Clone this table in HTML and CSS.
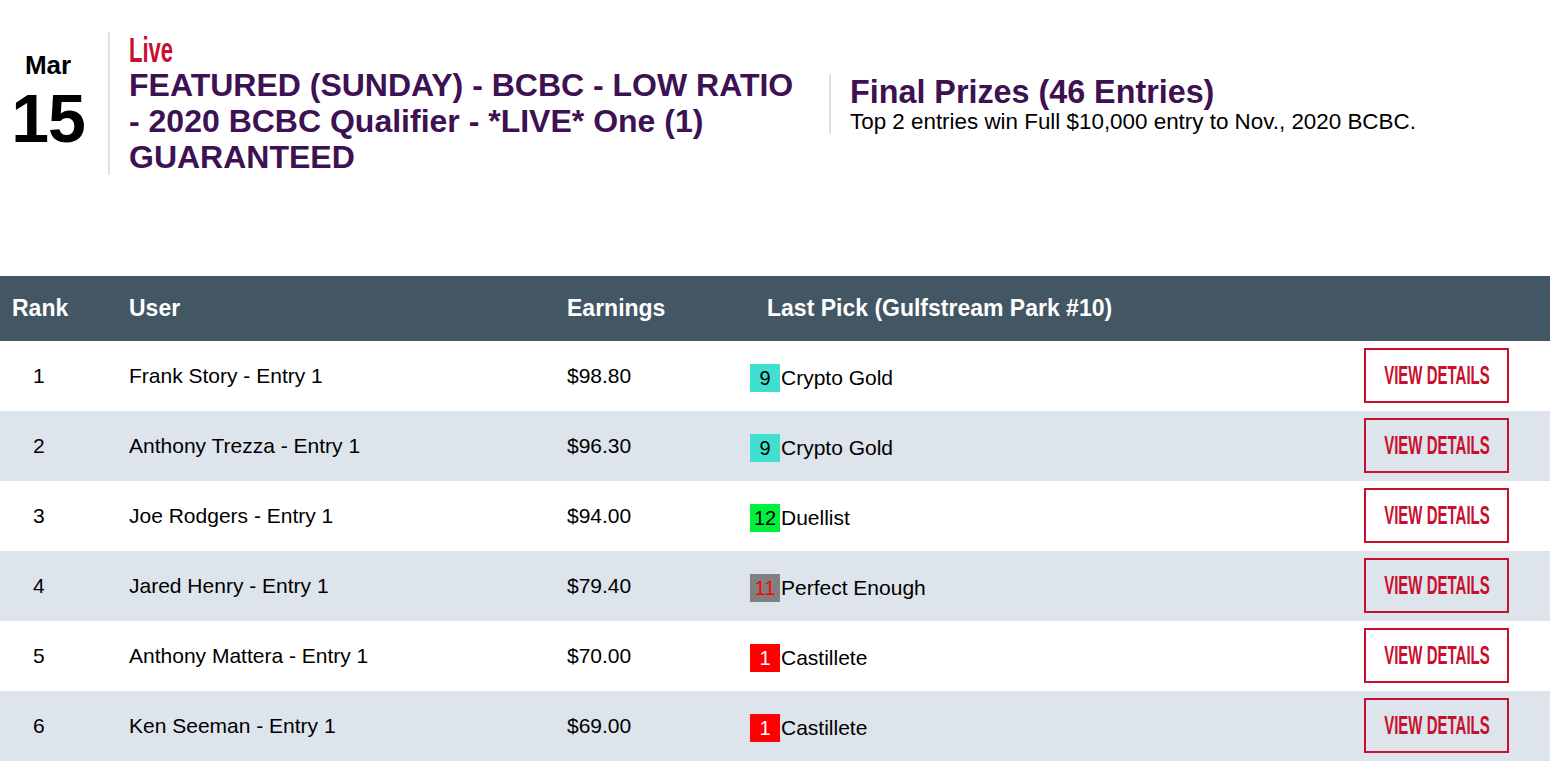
FILE: index.html
```html
<!DOCTYPE html>
<html>
<head>
<meta charset="utf-8">
<link rel="stylesheet" href="styles.css">
</head>
<body>
<header class="event">
  <div class="date">
    <div class="month">Mar</div>
    <div class="day">15</div>
  </div>
  <div class="info">
    <div class="status"><span class="live">Live</span></div>
    <h1 class="title">FEATURED (SUNDAY) - BCBC - LOW RATIO - 2020 BCBC Qualifier - *LIVE* One (1) GUARANTEED</h1>
  </div>
  <div class="prizes">
    <div class="prizes-title">Final Prizes (46 Entries)</div>
    <div class="prizes-text">Top 2 entries win Full $10,000 entry to Nov., 2020 BCBC.</div>
  </div>
</header>
<table class="board">
  <colgroup>
    <col class="c-rank"><col class="c-user"><col class="c-earn"><col class="c-pick"><col class="c-btn">
  </colgroup>
  <thead>
    <tr>
      <th class="th-rank">Rank</th>
      <th>User</th>
      <th>Earnings</th>
      <th class="th-pick">Last Pick (Gulfstream Park #10)</th>
      <th></th>
    </tr>
  </thead>
  <tbody>
    <tr>
      <td class="rank">1</td><td>Frank Story - Entry 1</td><td>$98.80</td>
      <td><span class="badge b-turq">9</span><span class="horse">Crypto Gold</span></td>
      <td class="act"><a class="btn"><span>VIEW DETAILS</span></a></td>
    </tr>
    <tr>
      <td class="rank">2</td><td>Anthony Trezza - Entry 1</td><td>$96.30</td>
      <td><span class="badge b-turq">9</span><span class="horse">Crypto Gold</span></td>
      <td class="act"><a class="btn"><span>VIEW DETAILS</span></a></td>
    </tr>
    <tr>
      <td class="rank">3</td><td>Joe Rodgers - Entry 1</td><td>$94.00</td>
      <td><span class="badge b-green">12</span><span class="horse">Duellist</span></td>
      <td class="act"><a class="btn"><span>VIEW DETAILS</span></a></td>
    </tr>
    <tr>
      <td class="rank">4</td><td>Jared Henry - Entry 1</td><td>$79.40</td>
      <td><span class="badge b-gray">11</span><span class="horse">Perfect Enough</span></td>
      <td class="act"><a class="btn"><span>VIEW DETAILS</span></a></td>
    </tr>
    <tr>
      <td class="rank">5</td><td>Anthony Mattera - Entry 1</td><td>$70.00</td>
      <td><span class="badge b-red">1</span><span class="horse">Castillete</span></td>
      <td class="act"><a class="btn"><span>VIEW DETAILS</span></a></td>
    </tr>
    <tr>
      <td class="rank">6</td><td>Ken Seeman - Entry 1</td><td>$69.00</td>
      <td><span class="badge b-red">1</span><span class="horse">Castillete</span></td>
      <td class="act"><a class="btn"><span>VIEW DETAILS</span></a></td>
    </tr>
  </tbody>
</table>
</body>
</html>
```
FILE: styles.css
```css
* { box-sizing: border-box; }
html, body { margin: 0; padding: 0; background: #fff; }
body {
  font-family: "Liberation Sans", Arial, Helvetica, sans-serif;
  color: #000;
  overflow: hidden;
}

.event {
  display: flex;
  align-items: flex-start;
  height: 276px;
  padding-top: 32px;
}

.date {
  width: 110px;
  padding-right: 12px;
  padding-top: 18px;
  height: 143px;
  border-right: 2px solid #e1e1e1;
  text-align: center;
  font-weight: bold;
}
.month { font-size: 26px; line-height: 30px; }
.day { font-size: 68px; line-height: 68px; margin-top: 4px; letter-spacing: -1px; }

.info {
  width: 700px;
  padding-left: 19px;
}
.status { height: 35px; line-height: 35px; }
.live {
  display: inline-block;
  font-size: 35px;
  font-weight: bold;
  color: #c8102e;
  transform: scaleX(0.63);
  transform-origin: left center;
}
.title {
  margin: 0;
  font-size: 32px;
  line-height: 36px;
  font-weight: bold;
  color: #3d1152;
}

.prizes {
  margin-top: 42px;
  margin-left: 19px;
  padding-left: 19px;
  border-left: 2px solid #e1e1e1;
}
.prizes-title {
  font-size: 32.3px;
  line-height: 36px;
  font-weight: bold;
  color: #3d1152;
}
.prizes-text { font-size: 22.4px; line-height: 24px; }

.board {
  width: 100%;
  border-collapse: collapse;
  table-layout: fixed;
}
.c-rank { width: 129px; }
.c-user { width: 438px; }
.c-earn { width: 183px; }
.c-btn { width: 186px; }

.board thead tr { background: #435664; height: 65px; }
.board th {
  color: #fff;
  font-size: 23px;
  font-weight: bold;
  text-align: left;
  padding: 0;
}
.board th.th-rank { padding-left: 12px; }
.board th.th-pick { padding-left: 17px; }

.board tbody tr { height: 70px; }
.board tbody tr:nth-child(even) { background: #dde4ec; }
.board td {
  font-size: 21px;
  padding: 0;
  vertical-align: middle;
  white-space: nowrap;
}
.board td.rank { padding-left: 33px; }

.badge {
  display: inline-block;
  width: 30px;
  height: 28px;
  line-height: 28px;
  text-align: center;
  vertical-align: middle;
  font-size: 20px;
  margin-top: 3px;
}
.horse { vertical-align: middle; margin-left: 1px; position: relative; top: 2px; }
.b-turq { background: #40e0d0; color: #000; }
.b-green { background: #00f03c; color: #000; }
.b-gray { background: #808080; color: #ff0000; }
.b-red { background: #ff0000; color: #fff; }

.act { text-align: right; padding-right: 41px !important; }
.btn {
  display: inline-flex;
  align-items: center;
  justify-content: center;
  width: 145px;
  height: 55px;
  border: 2px solid #c8102e;
  color: #c8102e;
  vertical-align: middle;
  overflow: hidden;
  margin-top: -1px;
}
.btn span {
  display: inline-block;
  font-size: 25px;
  font-weight: bold;
  white-space: nowrap;
  transform: scaleX(0.6);
}
```
